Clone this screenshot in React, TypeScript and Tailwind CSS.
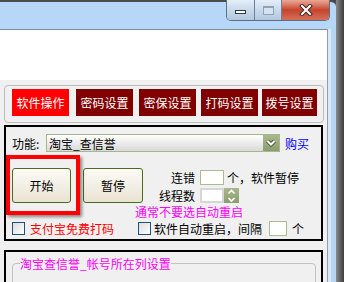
import React from "react";

const tabs = [
  { label: "软件操作", active: true, w: "w-[57px]", ml: "ml-0" },
  { label: "密码设置", active: false, w: "w-[57px]", ml: "ml-[7px]" },
  { label: "密保设置", active: false, w: "w-[57px]", ml: "ml-[6px]" },
  { label: "打码设置", active: false, w: "w-[57px]", ml: "ml-[5px]" },
  { label: "拨号设置", active: false, w: "w-[55px]", ml: "ml-[4px]" },
];

function CaptionButtons() {
  return (
    <div className="-mt-[2px] flex h-[21px] overflow-hidden rounded-b-[5px] border border-t-0 border-[#5b6f86]">
      <div className="flex w-[28px] items-center justify-center border-r border-[#6d8097] bg-linear-to-b from-[#e4eef9] via-[#c8d9eb] to-[#b3c8de]">
        <div className="mt-[4px] h-[4px] w-[11px] border border-[#2f3a46] bg-white" />
      </div>
      <div className="flex w-[27px] items-center justify-center border-r border-[#6d8097] bg-linear-to-b from-[#e4eef9] via-[#c8d9eb] to-[#b3c8de]">
        <div className="h-[9px] w-[11px] border border-[#8ea2b8] border-t-2 bg-[#d6e2ef]" />
      </div>
      <div className="flex w-[47px] items-center justify-center bg-linear-to-b from-[#e9a898] via-[#c6432c] to-[#d66f58]">
        <svg width="14" height="12" viewBox="0 0 14 12">
          <path d="M3 2 L11 10 M11 2 L3 10" stroke="#3a2a28" strokeWidth="4" strokeLinecap="square" />
          <path d="M3 2 L11 10 M11 2 L3 10" stroke="#ffffff" strokeWidth="2" strokeLinecap="square" />
        </svg>
      </div>
    </div>
  );
}

function Checkbox() {
  return <div className="h-[13px] w-[13px] shrink-0 border border-[#1d5180] bg-linear-to-br from-[#dcdcdc] to-white" />;
}

function BigButton({ label, w }: { label: string; w: string }) {
  return (
    <button className={`${w} h-[35px] rounded-[3px] border border-[#4b6a1d] bg-linear-to-b from-[#fcfbf6] to-[#e9e3d3] text-[12px] text-black`}>
      {label}
    </button>
  );
}

export default function App() {
  return (
    <div className="flex h-[282px] w-[344px] overflow-hidden bg-[#474747] font-['Noto_Sans_CJK_SC','Liberation_Sans',sans-serif] text-[12px] leading-[13px]">
      <div className="flex w-[336px] flex-col">
        {/* title bar */}
        <div className="flex h-[29px] shrink-0 justify-end rounded-tr-[6px] border-t-2 border-[#4d4d4d] bg-[#b7d7f9] pr-[6px]">
          <CaptionButtons />
        </div>

        <div className="flex flex-1">
          <div className="flex w-[328px] flex-col border-r border-[#8c9fb4]">
            <div className="h-[51px] shrink-0 border-t border-[#7a8fa6] bg-white" />

            <div className="flex flex-1 flex-col bg-[#f0f0f0] pl-[4px] pt-[5px]">
              {/* tab buttons */}
              <div className="flex h-[38px] w-[320px] rounded-[4px] border border-[#bdbdbd] pl-[7px] pt-[3px]">
                {tabs.map((t) => (
                  <div
                    key={t.label}
                    className={`${t.w} ${t.ml} flex h-[27px] items-center justify-center text-white ${t.active ? "bg-[#ff0000]" : "bg-[#800000]"}`}
                  >
                    {t.label}
                  </div>
                ))}
              </div>

              {/* operation panel */}
              <div className="relative mt-[2px] h-[116px] w-[319px] border-2 border-black">
                <div className="mt-[7px] flex h-[18px] items-center">
                  <span className="ml-[6px] w-[34px]">功能:</span>
                  <div className="flex h-[18px] w-[234px] items-center border border-[#a4b88a] bg-linear-to-b from-white to-[#d9d9d9]">
                    <span className="flex-1 pl-[2px]">淘宝_查信誉</span>
                    <div className="flex h-full w-[16px] items-center justify-center bg-linear-to-b from-[#a9b98e] to-[#8c9d70]">
                      <svg width="12" height="10" viewBox="0 0 12 10">
                        <path d="M2.5 3 L6 6.5 L9.5 3" fill="none" stroke="#4b5a36" strokeWidth="4" />
                        <path d="M2.5 3 L6 6.5 L9.5 3" fill="none" stroke="#ffffff" strokeWidth="2" />
                      </svg>
                    </div>
                  </div>
                  <span className="ml-[5px] text-[#0000ff]">购买</span>
                </div>

                <div className="mt-[16px] flex">
                  <div className="ml-[6px]">
                    <BigButton label="开始" w="w-[59px]" />
                  </div>
                  <div className="ml-[12px]">
                    <BigButton label="暂停" w="w-[60px]" />
                  </div>
                  <div className="flex flex-col pt-[2px]">
                    <div className="flex h-[15px] items-center">
                      <span className="w-[52px] text-right">连错</span>
                      <div className="ml-[5px] h-[15px] w-[24px] border border-[#a8bc8e] bg-white" />
                      <span className="ml-[3px]">个，软件暂停</span>
                    </div>
                    <div className="mt-[3px] flex h-[15px] items-center">
                      <span className="w-[52px] text-right">线程数</span>
                      <div className="ml-[5px] h-[15px] w-[24px] border-2 border-[#d6d6d6] bg-white" />
                      <div className="flex h-[15px] w-[15px] flex-col bg-linear-to-b from-[#a8b88d] to-[#8b9c70]">
                        <svg width="15" height="7.5" viewBox="0 0 15 7.5">
                          <path d="M4.5 5.5 L7.5 2.5 L10.5 5.5" fill="none" stroke="#ffffff" strokeWidth="1.6" />
                        </svg>
                        <svg width="15" height="7.5" viewBox="0 0 15 7.5">
                          <path d="M4.5 2 L7.5 5 L10.5 2" fill="none" stroke="#ffffff" strokeWidth="1.6" />
                        </svg>
                      </div>
                    </div>
                  </div>
                </div>

                <div className="ml-[129px] mt-[2px] text-[#ff00ff]">通常不要选自动重启</div>

                <div className="mt-[3px] flex h-[15px] items-center">
                  <div className="ml-[6px]">
                    <Checkbox />
                  </div>
                  <span className="ml-[5px] text-[#ff0000]">支付宝免费打码</span>
                  <div className="ml-[24px]">
                    <Checkbox />
                  </div>
                  <span className="ml-[3px]">软件自动重启，间隔</span>
                  <div className="ml-[7px] h-[15px] w-[18px] border border-[#a8bc8e] bg-white" />
                  <span className="ml-[5px]">个</span>
                </div>

                {/* red highlight drawn over the start button */}
                <div className="absolute left-0 top-[28px] h-[60px] w-[74px] border-4 border-[#ff0000] shadow-[2px_2px_3px_rgba(0,0,0,0.45)]" />
              </div>

              {/* account column settings */}
              <div className="mt-[9px] flex-1 w-[319px] border-2 border-b-0 border-black">
                <fieldset className="ml-[6px] mt-[5px] h-[60px] w-[304px] rounded-t-[4px] border border-[#c4c0c4]">
                  <legend className="ml-[7px] text-[#ff00ff]">淘宝查信誉_帐号所在列设置</legend>
                </fieldset>
              </div>
            </div>
          </div>
          <div className="flex-1 border-l-[3px] border-[#dbe8f6] bg-[#b6d4f3]" />
        </div>
      </div>
      <div className="w-[8px] bg-linear-to-r from-[#8b8b8b] to-[#3f3f3f]" />
    </div>
  );
}
